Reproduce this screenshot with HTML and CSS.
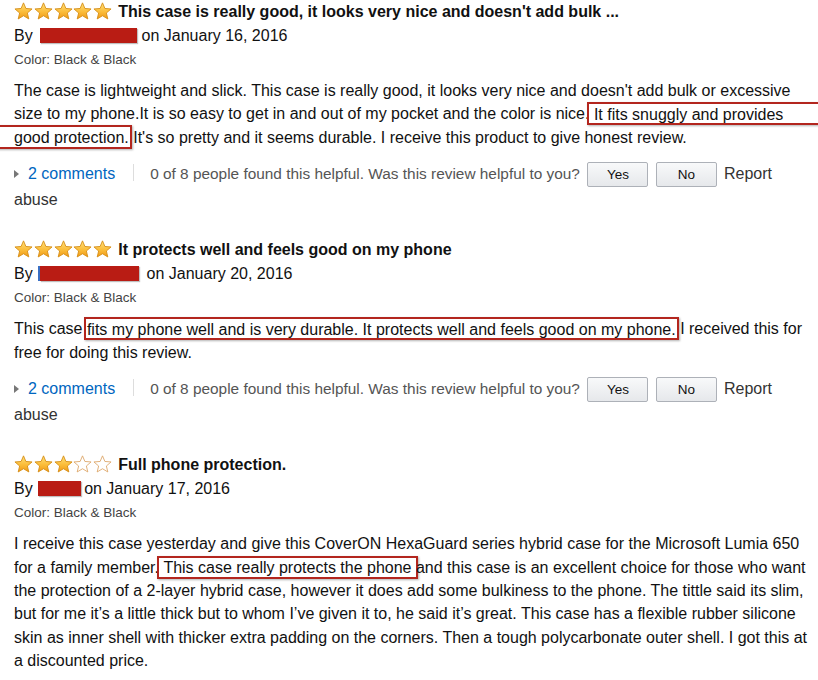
FILE: index.html
```html
<!DOCTYPE html>
<html lang="en">
<head>
<meta charset="utf-8">
<title>Reviews</title>
<link rel="stylesheet" href="styles.css">
</head>
<body>
<svg class="defs" aria-hidden="true">
  <defs>
    <linearGradient id="starGrad" x1="0" y1="0" x2="0" y2="1">
      <stop offset="0" stop-color="#ffe07a"/>
      <stop offset="0.55" stop-color="#fbbd3a"/>
      <stop offset="1" stop-color="#f09a17"/>
    </linearGradient>
    <symbol id="star-full" viewBox="0 0 20 19">
      <polygon points="10,0.9 12.53,6.82 19.03,7.33 14.09,11.6 15.6,17.9 10,14.5 4.4,17.9 5.91,11.6 0.97,7.33 7.47,6.82" fill="url(#starGrad)" stroke="#d38b12" stroke-width="0.9" stroke-linejoin="round"/>
    </symbol>
    <symbol id="star-empty" viewBox="0 0 20 19">
      <polygon points="10,0.9 12.53,6.82 19.03,7.33 14.09,11.6 15.6,17.9 10,14.5 4.4,17.9 5.91,11.6 0.97,7.33 7.47,6.82" fill="#fff" stroke="#dca364" stroke-width="0.9" stroke-linejoin="round"/>
    </symbol>
  </defs>
</svg>

<div class="reviews">
  <div class="review">
    <div class="review-head">
      <span class="stars">
        <svg class="star"><use href="#star-full"/></svg><svg class="star"><use href="#star-full"/></svg><svg class="star"><use href="#star-full"/></svg><svg class="star"><use href="#star-full"/></svg><svg class="star"><use href="#star-full"/></svg>
      </span>
      <span class="review-title">This case is really good, it looks very nice and doesn't add bulk ...</span>
    </div>
    <div class="byline">By <span class="redact redact-a"></span> on January 16, 2016</div>
    <div class="variant">Color: Black &amp; Black</div>
    <p class="review-text">The case is lightweight and slick. This case is really good, it looks very nice and doesn't add bulk or excessive size to my phone.It is so easy to get in and out of my pocket and the color is nice. <span class="mark mark-open-end">It fits snuggly and provides</span> <span class="mark mark-open-start">good protection.</span> It's so pretty and it seems durable. I receive this product to give honest review.</p>
    <div class="actions"><span class="toggle"></span><a class="comments-link" href="#">2 comments</a><span class="sep"></span><span class="helpful">0 of 8 people found this helpful. Was this review helpful to you?</span><span class="btn btn-yes">Yes</span><span class="btn btn-no">No</span><a class="report" href="#">Report abuse</a></div>
  </div>

  <div class="review">
    <div class="review-head">
      <span class="stars">
        <svg class="star"><use href="#star-full"/></svg><svg class="star"><use href="#star-full"/></svg><svg class="star"><use href="#star-full"/></svg><svg class="star"><use href="#star-full"/></svg><svg class="star"><use href="#star-full"/></svg>
      </span>
      <span class="review-title">It protects well and feels good on my phone</span>
    </div>
    <div class="byline">By <span class="redact redact-b"></span> on January 20, 2016</div>
    <div class="variant">Color: Black &amp; Black</div>
    <p class="review-text">This case <span class="mark">fits my phone well and is very durable. It protects well and feels good on my phone.</span> I received this for free for doing this review.</p>
    <div class="actions"><span class="toggle"></span><a class="comments-link" href="#">2 comments</a><span class="sep"></span><span class="helpful">0 of 8 people found this helpful. Was this review helpful to you?</span><span class="btn btn-yes">Yes</span><span class="btn btn-no">No</span><a class="report" href="#">Report abuse</a></div>
  </div>

  <div class="review">
    <div class="review-head">
      <span class="stars">
        <svg class="star"><use href="#star-full"/></svg><svg class="star"><use href="#star-full"/></svg><svg class="star"><use href="#star-full"/></svg><svg class="star"><use href="#star-empty"/></svg><svg class="star"><use href="#star-empty"/></svg>
      </span>
      <span class="review-title">Full phone protection.</span>
    </div>
    <div class="byline">By <span class="redact redact-c"></span>on January 17, 2016</div>
    <div class="variant">Color: Black &amp; Black</div>
    <p class="review-text">I receive this case yesterday and give this CoverON HexaGuard series hybrid case for the Microsoft Lumia 650 for a family member. <span class="mark mark-wide">This case really protects the phone</span> and this case is an excellent choice for those who want the protection of a 2-layer hybrid case, however it does add some bulkiness to the phone. The tittle said its slim, but for me it’s a little thick but to whom I’ve given it to, he said it’s great. This case has a flexible rubber silicone skin as inner shell with thicker extra padding on the corners. Then a tough polycarbonate outer shell. I got this at a discounted price.</p>
  </div>
</div>
</body>
</html>
```

FILE: styles.css
```css
html {
  overflow-x: hidden;
}

body {
  margin: 0;
  background: #ffffff;
  color: #111111;
  font-family: "Liberation Sans", Arial, Helvetica, sans-serif;
  overflow-x: hidden;
}

.defs {
  position: absolute;
  width: 0;
  height: 0;
  overflow: hidden;
}

.reviews {
  padding: 0 2px 0 14px;
}

.review {
  padding-bottom: 26.5px;
}

.review-head {
  display: flex;
  align-items: center;
  height: 24px;
}

.stars {
  display: flex;
  gap: 0.8px;
  margin-right: 6px;
  margin-top: -2px;
}

.star {
  display: block;
  width: 19px;
  height: 18px;
}

.review-title {
  font-size: 16px;
  font-weight: bold;
  line-height: 24px;
  white-space: nowrap;
  color: #111111;
}

.byline {
  font-size: 16px;
  line-height: 24px;
}

.redact {
  display: inline-block;
  height: 15px;
  background: #b91c14;
  vertical-align: -2px;
  box-shadow: 1px 1px 1px rgba(0, 0, 0, 0.25);
}

.redact-a {
  width: 97px;
  margin-left: 3px;
}

.redact-b {
  width: 99px;
  margin-left: 3px;
  margin-right: 3px;
  box-shadow: -2px 0 0 #3a6fc4, 1px 1px 1px rgba(0, 0, 0, 0.25);
}

.redact-c {
  width: 43px;
  margin-left: 1px;
  margin-right: 3px;
}

.variant {
  font-size: 13.5px;
  line-height: 24px;
  color: #444444;
}

.review-text {
  margin: 7px 0 0;
  font-size: 16px;
  line-height: 23.3px;
}

.mark {
  border: 2px solid #b3261e;
  padding: 1.5px 1px 1px;
  margin: 0 -3px;
  box-shadow: 1px 1px 2px rgba(0, 0, 0, 0.3);
}

.mark-wide {
  padding: 1px 4px;
  margin: 0 -6px;
}

.mark-open-end {
  padding: 1.5px 40px 1px 5px;
  margin: 0 -42px 0 -7px;
}

.mark-open-start {
  padding: 1.5px 1px 1px 20px;
  margin: 0 -3px 0 -22px;
}

.actions {
  margin-top: 12px;
  font-size: 16px;
  line-height: 25px;
  color: #555555;
}

.helpful {
  font-size: 15.4px;
  color: #555555;
}

.toggle {
  display: inline-block;
  width: 0;
  height: 0;
  border-left: 5px solid #777777;
  border-top: 4px solid transparent;
  border-bottom: 4px solid transparent;
  margin-right: 9px;
  vertical-align: 1px;
}

.comments-link {
  color: #0066c0;
  text-decoration: none;
}

.sep {
  display: inline-block;
  width: 1px;
  height: 17px;
  background: #dddddd;
  margin: 0 16px 0 18px;
  vertical-align: -2px;
}

.btn {
  display: inline-block;
  box-sizing: border-box;
  width: 61px;
  height: 25px;
  margin-left: 7.5px;
  line-height: 23px;
  font-size: 13.5px;
  color: #111111;
  text-align: center;
  border: 1px solid #adb1b8;
  border-radius: 2px;
  background: linear-gradient(#f8f9fa, #e6e8eb);
}

.report {
  margin-left: 7px;
  color: #333333;
  text-decoration: none;
}
```
